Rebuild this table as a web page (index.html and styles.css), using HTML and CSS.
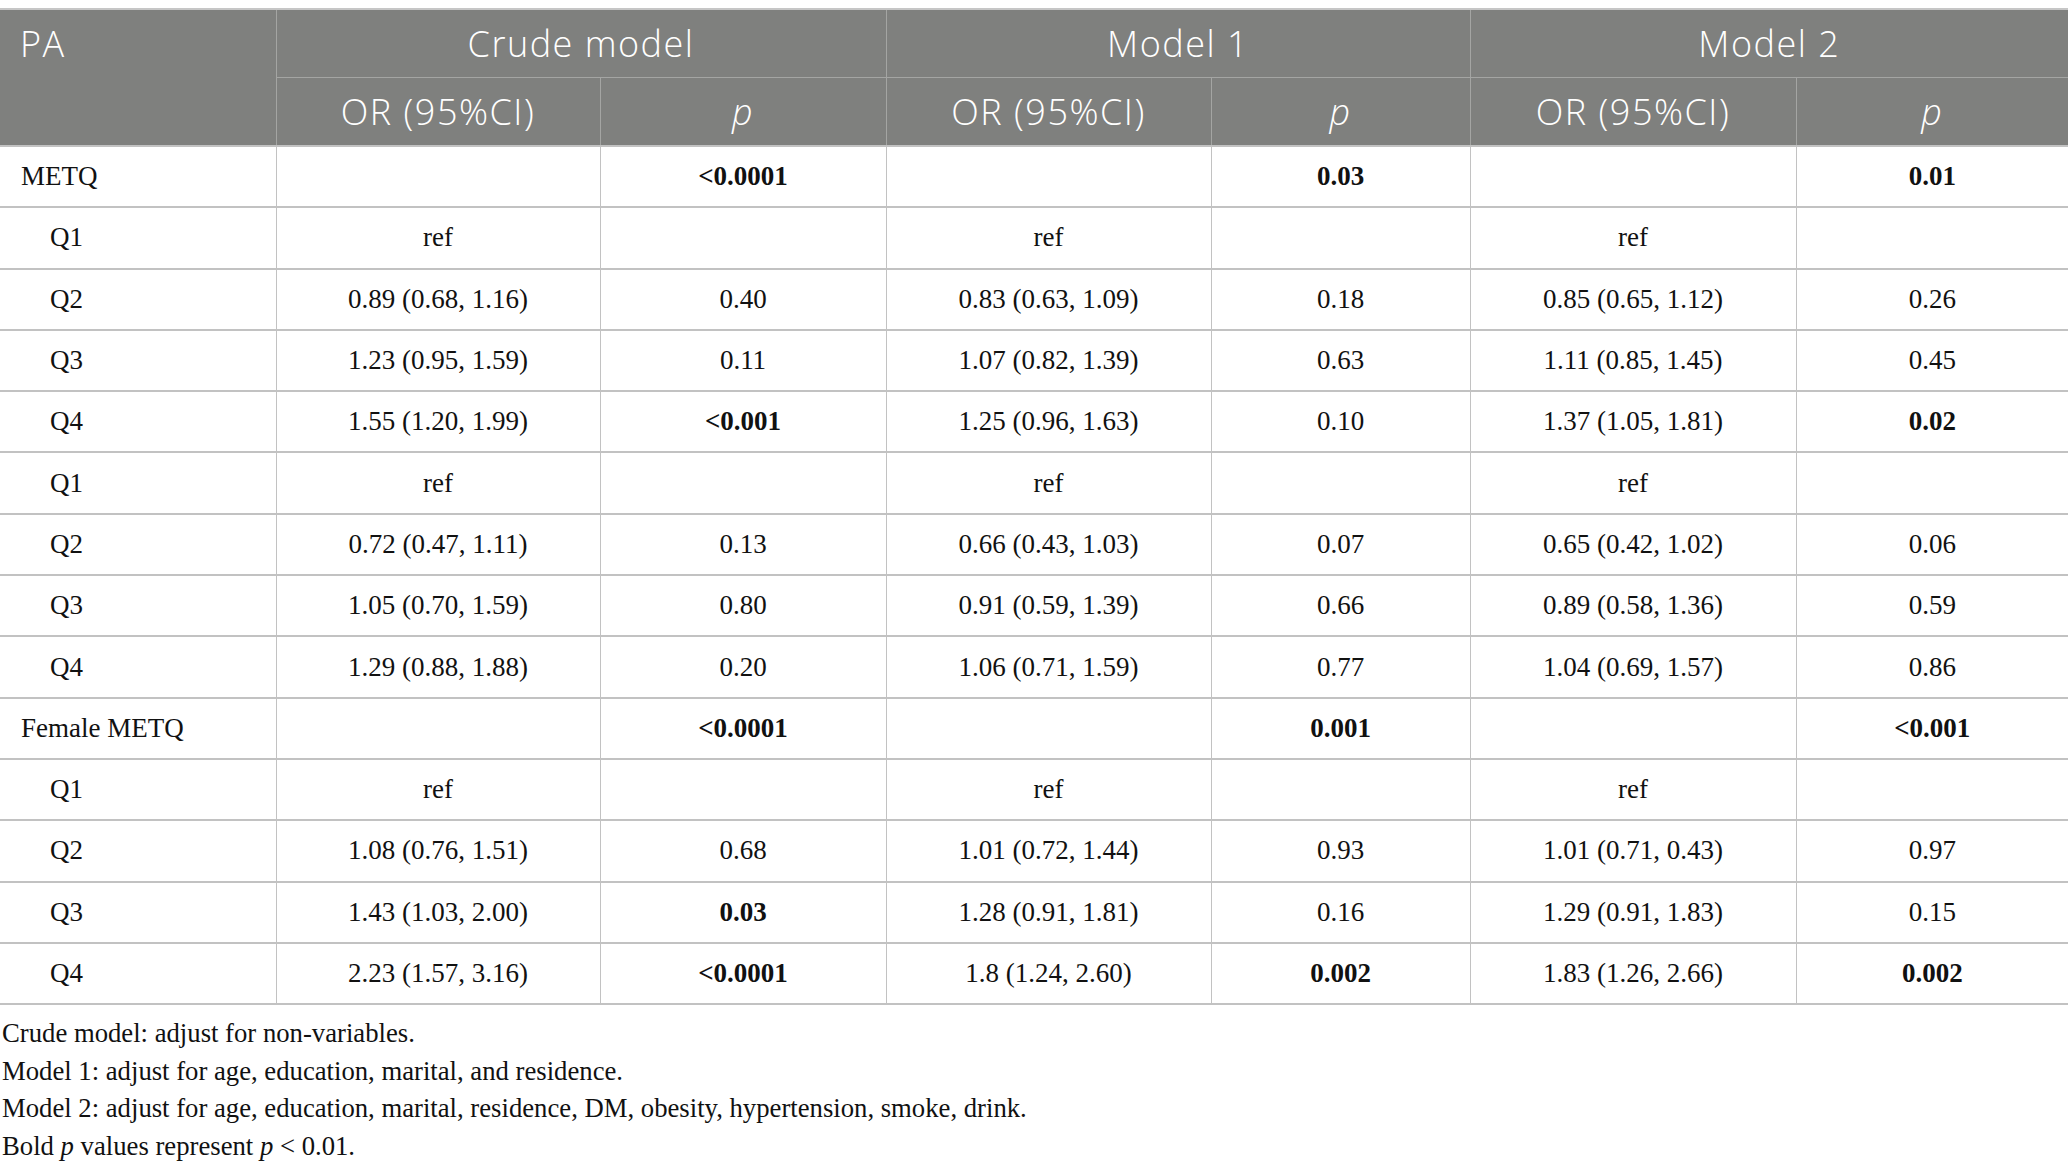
FILE: index.html
```html
<!DOCTYPE html>
<html lang="en">

<head>
    <meta charset="utf-8">
    <title>PA and METQ - odds ratios</title>
    <link rel="stylesheet" href="styles.css">
</head>

<body>
    <table class="tabel">
        <colgroup>
            <col class="c-navn">
            <col class="c-or1">
            <col class="c-p1">
            <col class="c-or2">
            <col class="c-p2">
            <col class="c-or3">
            <col class="c-p3">
        </colgroup>
        <thead>
            <tr class="hoved1">
                <th class="pa" rowspan="2">PA</th>
                <th colspan="2">Crude model</th>
                <th colspan="2">Model 1</th>
                <th colspan="2">Model 2</th>
            </tr>
            <tr class="hoved2">
                <th>OR (95%CI)</th>
                <th><i>p</i></th>
                <th>OR (95%CI)</th>
                <th><i>p</i></th>
                <th>OR (95%CI)</th>
                <th><i>p</i></th>
            </tr>
        </thead>
        <tbody>
            <tr>
                <td class="navn">METQ</td>
                <td></td>
                <td><b>&lt;0.0001</b></td>
                <td></td>
                <td><b>0.03</b></td>
                <td></td>
                <td><b>0.01</b></td>
            </tr>
            <tr>
                <td class="navn sub">Q1</td>
                <td>ref</td>
                <td></td>
                <td>ref</td>
                <td></td>
                <td>ref</td>
                <td></td>
            </tr>
            <tr>
                <td class="navn sub">Q2</td>
                <td>0.89 (0.68, 1.16)</td>
                <td>0.40</td>
                <td>0.83 (0.63, 1.09)</td>
                <td>0.18</td>
                <td>0.85 (0.65, 1.12)</td>
                <td>0.26</td>
            </tr>
            <tr>
                <td class="navn sub">Q3</td>
                <td>1.23 (0.95, 1.59)</td>
                <td>0.11</td>
                <td>1.07 (0.82, 1.39)</td>
                <td>0.63</td>
                <td>1.11 (0.85, 1.45)</td>
                <td>0.45</td>
            </tr>
            <tr>
                <td class="navn sub">Q4</td>
                <td>1.55 (1.20, 1.99)</td>
                <td><b>&lt;0.001</b></td>
                <td>1.25 (0.96, 1.63)</td>
                <td>0.10</td>
                <td>1.37 (1.05, 1.81)</td>
                <td><b>0.02</b></td>
            </tr>
            <tr>
                <td class="navn sub">Q1</td>
                <td>ref</td>
                <td></td>
                <td>ref</td>
                <td></td>
                <td>ref</td>
                <td></td>
            </tr>
            <tr>
                <td class="navn sub">Q2</td>
                <td>0.72 (0.47, 1.11)</td>
                <td>0.13</td>
                <td>0.66 (0.43, 1.03)</td>
                <td>0.07</td>
                <td>0.65 (0.42, 1.02)</td>
                <td>0.06</td>
            </tr>
            <tr>
                <td class="navn sub">Q3</td>
                <td>1.05 (0.70, 1.59)</td>
                <td>0.80</td>
                <td>0.91 (0.59, 1.39)</td>
                <td>0.66</td>
                <td>0.89 (0.58, 1.36)</td>
                <td>0.59</td>
            </tr>
            <tr>
                <td class="navn sub">Q4</td>
                <td>1.29 (0.88, 1.88)</td>
                <td>0.20</td>
                <td>1.06 (0.71, 1.59)</td>
                <td>0.77</td>
                <td>1.04 (0.69, 1.57)</td>
                <td>0.86</td>
            </tr>
            <tr>
                <td class="navn">Female METQ</td>
                <td></td>
                <td><b>&lt;0.0001</b></td>
                <td></td>
                <td><b>0.001</b></td>
                <td></td>
                <td><b>&lt;0.001</b></td>
            </tr>
            <tr>
                <td class="navn sub">Q1</td>
                <td>ref</td>
                <td></td>
                <td>ref</td>
                <td></td>
                <td>ref</td>
                <td></td>
            </tr>
            <tr>
                <td class="navn sub">Q2</td>
                <td>1.08 (0.76, 1.51)</td>
                <td>0.68</td>
                <td>1.01 (0.72, 1.44)</td>
                <td>0.93</td>
                <td>1.01 (0.71, 0.43)</td>
                <td>0.97</td>
            </tr>
            <tr>
                <td class="navn sub">Q3</td>
                <td>1.43 (1.03, 2.00)</td>
                <td><b>0.03</b></td>
                <td>1.28 (0.91, 1.81)</td>
                <td>0.16</td>
                <td>1.29 (0.91, 1.83)</td>
                <td>0.15</td>
            </tr>
            <tr>
                <td class="navn sub">Q4</td>
                <td>2.23 (1.57, 3.16)</td>
                <td><b>&lt;0.0001</b></td>
                <td>1.8 (1.24, 2.60)</td>
                <td><b>0.002</b></td>
                <td>1.83 (1.26, 2.66)</td>
                <td><b>0.002</b></td>
            </tr>
        </tbody>
    </table>

    <div class="noter">
        <p>Crude model: adjust for non-variables.</p>
        <p>Model 1: adjust for age, education, marital, and residence.</p>
        <p>Model 2: adjust for age, education, marital, residence, DM, obesity, hypertension, smoke, drink.</p>
        <p>Bold <i>p</i> values represent <i>p</i> &lt; 0.01.</p>
    </div>
</body>

</html>
```

FILE: styles.css
```css
body {
    margin: 8px 0 0 0;
    background-color: #fff;
    font-family: 'Liberation Serif', serif;
    color: #111;
}

.tabel {
    width: 2068px;
    table-layout: fixed;
    border-collapse: collapse;
    border-top: 2px solid #c6c6c6;
}

.c-navn { width: 276px; }
.c-or1 { width: 324px; }
.c-p1 { width: 286px; }
.c-or2 { width: 325px; }
.c-p2 { width: 259px; }
.c-or3 { width: 326px; }
.c-p3 { width: 272px; }

th {
    background-color: #7f807e;
    color: #fff;
    font-family: 'Open Sans', sans-serif;
    font-weight: 300;
    font-size: 36px;
    letter-spacing: 1.5px;
    text-align: center;
    padding: 0;
    border: 1px solid #a4a5a3;
}

th i {
    font-style: italic;
}

.hoved1 {
    height: 68px;
}

.hoved2 {
    height: 69px;
}

th.pa {
    text-align: left;
    vertical-align: top;
    padding: 9px 0 0 20px;
    border-left: none;
}

td {
    font-size: 27px;
    text-align: center;
    height: 59.3px;
    padding: 0;
    border-top: 2px solid #c2c2c2;
    border-bottom: 2px solid #c2c2c2;
    border-left: 1px solid #c2c2c2;
    border-right: 1px solid #c2c2c2;
}

td:first-child {
    border-left: none;
}

td:last-child,
th:last-child {
    border-right: none;
}

td.navn {
    text-align: left;
    padding-left: 21px;
}

td.sub {
    padding-left: 50px;
}

.noter {
    padding: 10px 0 0 2px;
}

.noter p {
    font-size: 26.7px;
    margin: 0;
    line-height: 37.5px;
}
```
